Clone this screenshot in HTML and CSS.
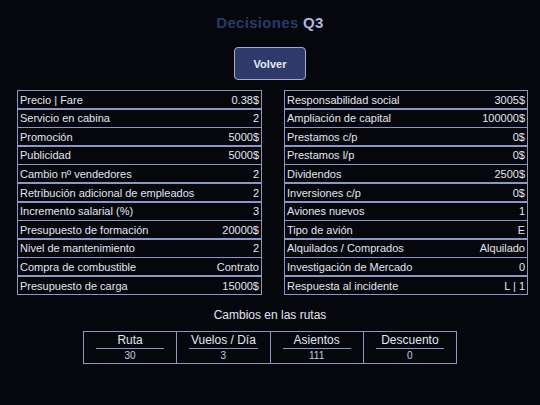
FILE: index.html
```html
<!DOCTYPE html>
<html lang="es">
<head>
  <meta charset="UTF-8" />
  <meta name="viewport" content="width=device-width, initial-scale=1.0"/>
  <title>Decisiones Q3</title>
  <link rel="stylesheet" href="styles.css">
</head>
<body>
  <header>
    <h1 class="page-title">Decisiones <span class="quarter">Q3</span></h1>
    <button class="back-button">Volver</button>
  </header>

  <main class="decisions">
    <!-- Left column -->
    <div class="decision-list">
      <div class="row"><span>Precio | Fare</span><span>0.38$</span></div>
      <div class="row"><span>Servicio en cabina</span><span>2</span></div>
      <div class="row"><span>Promoción</span><span>5000$</span></div>
      <div class="row"><span>Publicidad</span><span>5000$</span></div>
      <div class="row"><span>Cambio nº vendedores</span><span>2</span></div>
      <div class="row"><span>Retribución adicional de empleados</span><span>2</span></div>
      <div class="row"><span>Incremento salarial (%)</span><span>3</span></div>
      <div class="row"><span>Presupuesto de formación</span><span>20000$</span></div>
      <div class="row"><span>Nivel de mantenimiento</span><span>2</span></div>
      <div class="row"><span>Compra de combustible</span><span>Contrato</span></div>
      <div class="row"><span>Presupuesto de carga</span><span>15000$</span></div>
    </div>

    <!-- Right column -->
    <div class="decision-list">
      <div class="row"><span>Responsabilidad social</span><span>3005$</span></div>
      <div class="row"><span>Ampliación de capital</span><span>100000$</span></div>
      <div class="row"><span>Prestamos c/p</span><span>0$</span></div>
      <div class="row"><span>Prestamos l/p</span><span>0$</span></div>
      <div class="row"><span>Dividendos</span><span>2500$</span></div>
      <div class="row"><span>Inversiones c/p</span><span>0$</span></div>
      <div class="row"><span>Aviones nuevos</span><span>1</span></div>
      <div class="row"><span>Tipo de avión</span><span>E</span></div>
      <div class="row"><span>Alquilados / Comprados</span><span>Alquilado</span></div>
      <div class="row"><span>Investigación de Mercado</span><span>0</span></div>
      <div class="row"><span>Respuesta al incidente</span><span>L | 1</span></div>
    </div>
  </main>

  <section class="routes">
    <div class="routes-title">Cambios en las rutas</div>
    <div class="routes-table">
      <div class="route-cell"><div class="route-head">Ruta</div><div class="route-value">30</div></div>
      <div class="route-cell"><div class="route-head">Vuelos / Día</div><div class="route-value">3</div></div>
      <div class="route-cell"><div class="route-head">Asientos</div><div class="route-value">111</div></div>
      <div class="route-cell"><div class="route-head">Descuento</div><div class="route-value">0</div></div>
    </div>
  </section>
</body>
</html>
```

FILE: styles.css
```css
body {
  margin: 0;
  font-family: 'Liberation Sans', Arial, sans-serif;
  background-color: #06070d;
  color: #e2e5f2;
  font-size: 11px;
}
header {
  display: flex;
  flex-direction: column;
  align-items: center;
  padding-top: 14px;
}
.page-title {
  margin: 0;
  font-size: 15px;
  font-weight: bold;
  color: #2c3868;
  letter-spacing: 0.3px;
}
.quarter {
  color: #aeb7de;
}
.back-button {
  margin-top: 16px;
  width: 72px;
  height: 33px;
  background-color: #2f3a6a;
  border: 1px solid #a2aad2;
  border-radius: 4px;
  color: #e8eaf5;
  font-family: inherit;
  font-size: 11px;
  font-weight: bold;
}
.decisions {
  display: flex;
  justify-content: space-between;
  padding: 10px 12px 0 17px;
}
.decision-list {
  width: 245px;
  display: flex;
  flex-direction: column;
}
.decision-list + .decision-list {
  width: 244px;
}
.row {
  display: flex;
  justify-content: space-between;
  align-items: center;
  height: 17px;
  padding: 0 2px;
  border: 1px solid #8e96c4;
  margin-bottom: -0.4px;
  white-space: nowrap;
}
.routes {
  display: flex;
  flex-direction: column;
  align-items: center;
  padding-top: 13px;
}
.routes-title {
  font-size: 12px;
  margin-bottom: 9px;
}
.routes-table {
  display: flex;
  width: 372px;
  border: 1px solid #8e96c4;
}
.route-cell {
  flex: 1;
  padding: 1px 12px 2px;
  text-align: center;
}
.route-cell + .route-cell {
  border-left: 1px solid #8e96c4;
}
.route-head {
  font-size: 12px;
  border-bottom: 1px solid #8e96c4;
  padding-bottom: 1px;
}
.route-value {
  font-size: 10px;
  color: #c8cce0;
  padding-top: 1px;
}
```
